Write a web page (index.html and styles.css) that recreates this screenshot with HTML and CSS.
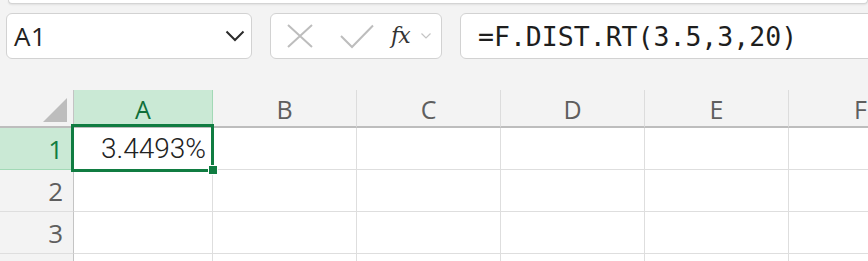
FILE: index.html
```
<!DOCTYPE html>
<html lang="en">
<head>
    <meta charset="UTF-8">
    <title>F.DIST.RT</title>
    <link rel="stylesheet" href="styles.css">
</head>
<body>
    <div class="ribbon-edge"></div>

    <div class="toolbar">
        <div class="name-box">
            <span class="name-text">A1</span>
            <svg class="name-arrow" width="20" height="12" viewBox="0 0 20 12">
                <path d="M1.5 1.5 L10 10 L18.5 1.5" fill="none" stroke="#2b2b2b" stroke-width="2"/>
            </svg>
        </div>

        <div class="fx-buttons">
            <svg class="btn-cancel" width="26" height="24" viewBox="0 0 26 24">
                <path d="M1 1 L25 23 M25 1 L1 23" stroke="#bdbdbd" stroke-width="2" fill="none"/>
            </svg>
            <svg class="btn-enter" width="34" height="25" viewBox="0 0 34 25">
                <path d="M1 12 L12 23 L33 1.5" stroke="#bdbdbd" stroke-width="2" fill="none"/>
            </svg>
            <span class="fx-label">fx</span>
            <svg class="fx-arrow" width="10" height="6" viewBox="0 0 10 6">
                <path d="M0.5 0.5 L5 5 L9.5 0.5" stroke="#c4c4c4" stroke-width="1.2" fill="none"/>
            </svg>
        </div>

        <div class="formula-box">=F.DIST.RT(3.5,3,20)</div>
    </div>

    <div class="sheet">
        <div class="corner"><div class="corner-tri"></div></div>
        <div class="col-head active">A</div>
        <div class="col-head">B</div>
        <div class="col-head">C</div>
        <div class="col-head">D</div>
        <div class="col-head">E</div>
        <div class="col-head">F</div>

        <div class="row-head active">1</div>
        <div class="cell num">3.4493%</div>
        <div class="cell"></div>
        <div class="cell"></div>
        <div class="cell"></div>
        <div class="cell"></div>
        <div class="cell"></div>

        <div class="row-head">2</div>
        <div class="cell"></div>
        <div class="cell"></div>
        <div class="cell"></div>
        <div class="cell"></div>
        <div class="cell"></div>
        <div class="cell"></div>

        <div class="row-head">3</div>
        <div class="cell"></div>
        <div class="cell"></div>
        <div class="cell"></div>
        <div class="cell"></div>
        <div class="cell"></div>
        <div class="cell"></div>

        <div class="row-head"></div>
        <div class="cell"></div>
        <div class="cell"></div>
        <div class="cell"></div>
        <div class="cell"></div>
        <div class="cell"></div>
        <div class="cell"></div>

        <div class="selection"><div class="fill-handle"></div></div>
    </div>
</body>
</html>
```

FILE: styles.css
```
body {
    margin: 0;
    background-color: #f3f3f3;
    font-family: "Open Sans", "Noto Sans", sans-serif;
    overflow: hidden;
}

.ribbon-edge {
    margin-left: 8px;
    height: 3px;
    background-color: #fff;
    border: 1px solid #d4d4d4;
    border-top: none;
    border-radius: 0 0 8px 8px;
    box-shadow: 0 1px 2px rgba(0, 0, 0, 0.08);
}

.toolbar {
    display: flex;
    gap: 18px;
    margin-top: 9px;
    padding-left: 6px;
    height: 46px;
}

.name-box,
.fx-buttons,
.formula-box {
    box-sizing: border-box;
    height: 46px;
    background-color: #fff;
    border: 1px solid #d2d2d2;
    border-radius: 6px;
    display: flex;
    align-items: center;
}

.name-box {
    width: 246px;
    padding: 0 6px 0 7px;
    justify-content: space-between;
}

.name-text {
    font-size: 26px;
    color: #222;
    letter-spacing: 0.5px;
}

.fx-buttons {
    width: 172px;
    padding-left: 16px;
}

.btn-cancel {
    margin-right: 27px;
}

.btn-enter {
    margin-right: 17px;
}

.fx-label {
    font-family: "DejaVu Serif", serif;
    font-style: italic;
    font-size: 22px;
    color: #333;
    letter-spacing: -1px;
    margin-right: 11px;
    margin-top: -2px;
}

.formula-box {
    flex: 1;
    margin-right: -20px;
    padding-left: 17px;
    font-family: "DejaVu Sans Mono", monospace;
    font-size: 26.5px;
    color: #1e1e1e;
}

/* grid */
.sheet {
    position: relative;
    margin-top: 31px;
    display: grid;
    grid-template-columns: 74px 139px 144px 144px 144px 144px 144px;
    grid-template-rows: 38px 42px 42px 42px 42px;
}

.corner {
    box-sizing: border-box;
    border-right: 1px solid #c4c4c4;
    border-bottom: 2px solid #bdbdbd;
    position: relative;
}

.corner-tri {
    position: absolute;
    right: 6px;
    bottom: 4px;
    width: 24px;
    height: 24px;
    background-color: #bdbdbd;
    clip-path: polygon(100% 0, 100% 100%, 0 100%);
}

.col-head {
    box-sizing: border-box;
    border-right: 1px solid #dcdcdc;
    border-bottom: 2px solid #bdbdbd;
    display: flex;
    align-items: center;
    justify-content: center;
    font-size: 25px;
    color: #5e5e5e;
    padding-top: 1px;
}

.col-head.active {
    background-color: #cae9d5;
    border-right-color: #a2d9b6;
    color: #0f6e39;
}

.row-head {
    box-sizing: border-box;
    border-right: 1px solid #c4c4c4;
    border-bottom: 1px solid #dedede;
    display: flex;
    align-items: center;
    justify-content: flex-end;
    padding-right: 10px;
    font-size: 26px;
    color: #5e5e5e;
}

.row-head.active {
    background-color: #cae9d5;
    border-bottom-color: #a2d9b6;
    color: #107c41;
}

.cell {
    box-sizing: border-box;
    background-color: #fff;
    border-right: 1px solid #dedede;
    border-bottom: 1px solid #dedede;
}

.cell.num {
    display: flex;
    align-items: center;
    justify-content: flex-end;
    padding-right: 6px;
    font-family: Roboto, sans-serif;
    font-weight: 300;
    font-size: 28px;
    color: #222;
}

.selection {
    position: absolute;
    left: 71px;
    top: 34px;
    width: 143px;
    height: 48px;
    box-sizing: border-box;
    border: 3px solid #107c41;
}

.fill-handle {
    position: absolute;
    left: 135px;
    top: 39px;
    width: 8px;
    height: 8px;
    background-color: #107c41;
    box-shadow: 0 0 0 1px #fff;
}
```
